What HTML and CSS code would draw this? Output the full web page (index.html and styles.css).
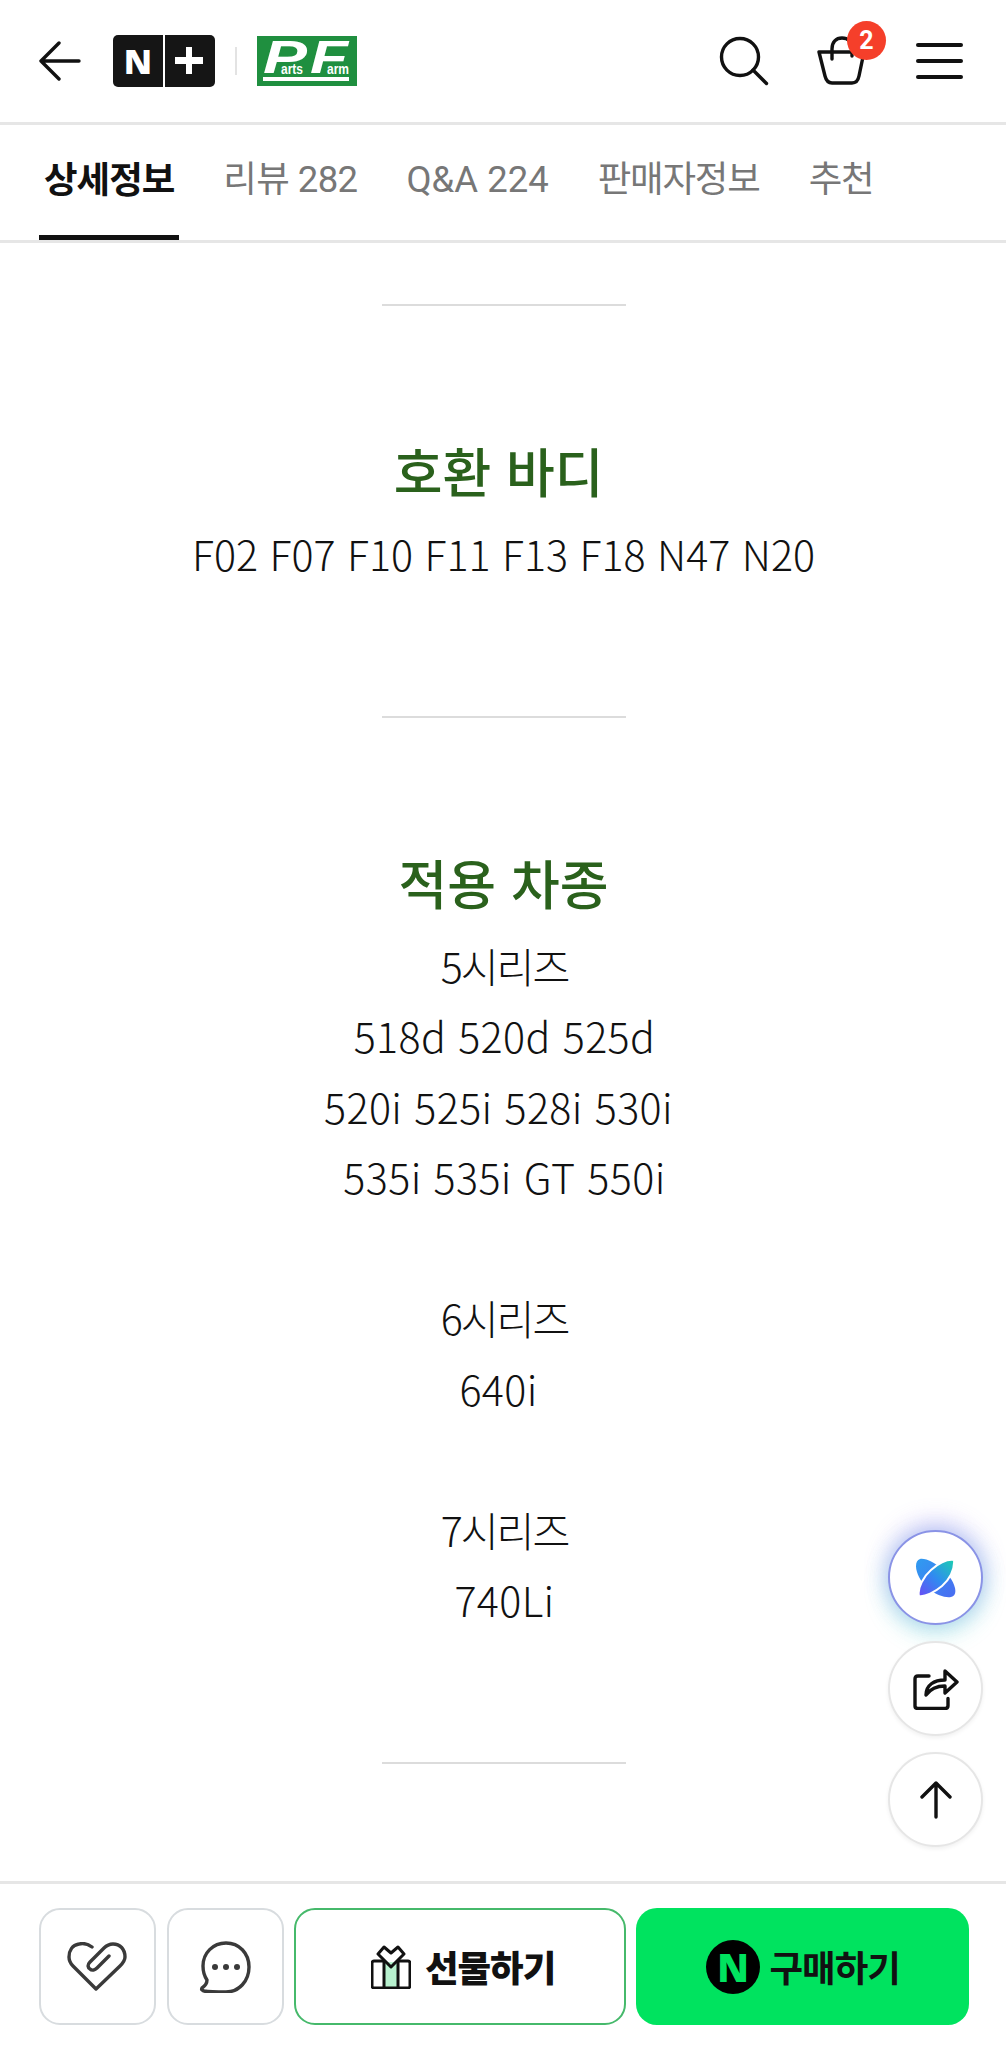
FILE: index.html

```html
<!DOCTYPE html>
<html lang="ko">
<head>
  <meta charset="UTF-8">
  <title>상세정보</title>
  <link rel="stylesheet" href="styles.css">
</head>
<body>
  <div class="page">
    <header class="top">
      <div class="top-left">
        <svg class="back" width="42" height="40" viewBox="0 0 42 40" fill="none" stroke="#111" stroke-width="3.4" stroke-linecap="round" stroke-linejoin="round"><path d="M20 2 2 20l18 18M2 20h38"/></svg>
        <div class="nplus"><span class="nplus-cell">N</span><span class="nplus-cell nplus-plus"></span></div>
        <span class="logo-sep"></span>
        <svg class="pf" width="100" height="50" viewBox="0 0 100 50">
          <rect width="100" height="50" fill="#1f8f3f"/>
          <text x="6" y="37" class="pf-big" textLength="44" lengthAdjust="spacingAndGlyphs">P</text>
          <text x="53" y="37" class="pf-big" textLength="38" lengthAdjust="spacingAndGlyphs">F</text>
          <text x="24" y="38" class="pf-small" textLength="22" lengthAdjust="spacingAndGlyphs">arts</text>
          <text x="70" y="38" class="pf-small" textLength="22" lengthAdjust="spacingAndGlyphs">arm</text>
          <rect x="6" y="41" width="86" height="4" fill="#fff"/>
        </svg>
      </div>
      <div class="top-right">
        <svg width="50" height="50" viewBox="0 0 50 50" fill="none" stroke="#111" stroke-width="3.4" stroke-linecap="round"><circle cx="21" cy="21" r="18.5"/><path d="M34 34l13.500 13.500"/></svg>
        <div class="cart">
          <svg width="50" height="50" viewBox="0 0 50 50" fill="none" stroke="#111" stroke-width="3.4" stroke-linecap="round" stroke-linejoin="round"><path d="M2 16h45l-5 24c-.8 4-3 7-7 7H15c-4 0-6-3-7-7zM15 23V13C15 6 19 2 25 2s10 4 10 11v7"/></svg>
          <span class="badge">2</span>
        </div>
        <div class="burger"><span></span><span></span><span></span></div>
      </div>
    </header>

    <nav class="tabs">
      <a class="tab tab-on">상세정보</a>
      <a class="tab tab-mixed">리뷰 282</a>
      <a class="tab tab-latin">Q&amp;A 224</a>
      <a class="tab">판매자정보</a>
      <a class="tab">추천</a>
    </nav>

    <main class="detail">
      <hr class="rule rule-first">
      <h2 class="title title-first">호환 바디&nbsp;</h2>
      <p class="copy">F02 F07 F10 F11 F13 F18 N47 N20</p>
      <hr class="rule rule-second">
      <h2 class="title title-tight">적용 차종</h2>
      <p class="copy copy-list"><span class="series">5시리즈</span><br>518d 520d 525d<br>520i 525i 528i 530i&nbsp;<br>535i 535i GT 550i<br><br><span class="series">6시리즈</span><br>640i&nbsp;<br><br><span class="series">7시리즈</span><br>740Li</p>
      <hr class="rule rule-third">

      <div class="floats">
        <button class="float float-ai">
          <svg width="40" height="40" viewBox="0 0 40 40">
            <defs>
              <linearGradient id="aiBack" x1="0" y1="0" x2="1" y2="1"><stop offset="0" stop-color="#2f9cf0"/><stop offset="1" stop-color="#4a6cf2"/></linearGradient>
              <linearGradient id="aiFront" x1="0" y1="1" x2="1" y2="0"><stop offset="0" stop-color="#6a4cf5"/><stop offset=".5" stop-color="#2f8cf0"/><stop offset="1" stop-color="#1ccfb0"/></linearGradient>
            </defs>
            <path fill="url(#aiBack)" d="M4 1C0 2-1 8 1 14c2 7 7 13 13 18 7 5 15 8 21 7 4-1 5-4 4-9-2-8-7-14-13-19C19 5 10 0 4 1z"/>
            <path fill="url(#aiFront)" stroke="#fff" stroke-width="2" d="M38 2c1 10-5 20-12 26-7 6-17 11-23 10-2-8 5-20 12-26C22 6 31 1 38 2z"/>
          </svg>
        </button>
        <button class="float">
          <svg width="46" height="42" viewBox="0 0 46 42" fill="none" stroke="#111" stroke-width="3.400" stroke-linecap="round" stroke-linejoin="round"><path d="M16 8H5C3 8 2 9 2 11v27c0 1.500 1 2.500 3 2.500h27c2 0 3-1 3-3v-7"/><path d="M13 27c0-10 8-15 19-15V3l12 11-12 11v-7c-8 0-14 2-19 9z"/></svg>
        </button>
        <button class="float">
          <svg width="32" height="38" viewBox="0 0 32 38" fill="none" stroke="#111" stroke-width="3.400" stroke-linecap="round" stroke-linejoin="round"><path d="M2 16 16 2l14 14M16 2v34"/></svg>
        </button>
      </div>
    </main>

    <footer class="bar">
      <button class="btn btn-icon btn-like">
        <svg width="60" height="50" viewBox="-1 -1 60 50" fill="none" stroke="#3a3a3a" stroke-width="3.400" stroke-linecap="round" stroke-linejoin="round"><path d="M24 4C20 1 15 0 11 1 4 2 1 8 1 14c0 4 2 7 4 9l23 23 24-23c3-3 5-6 5-9 0-8-5-13-12-13-4 0-7 2-9 4L22 19c-3 3-2 6 0 7 2 2 5 1 7-1l12-12"/></svg>
      </button>
      <button class="btn btn-icon">
        <svg width="52" height="52" viewBox="0 0 52 52" fill="none" stroke="#3a3a3a" stroke-width="3.400" stroke-linecap="round" stroke-linejoin="round"><path d="M27 2C14 2 4 12 4 25c0 6 2 11 4 14 0 3-2 6-5 8-1 2 0 2 2 3 6 1 13 1 22 1 13 0 23-11 23-25S40 2 27 2z"/><circle cx="16" cy="26" r="3" fill="#3a3a3a" stroke="none"/><circle cx="27" cy="26" r="3" fill="#3a3a3a" stroke="none"/><circle cx="38" cy="26" r="3" fill="#3a3a3a" stroke="none"/></svg>
      </button>
      <button class="btn btn-gift">
        <svg width="40" height="44" viewBox="0 0 40 44" fill="none" stroke="#111" stroke-width="3" stroke-linejoin="round"><rect x="14" y="17" width="12" height="25" fill="#b8f2cf" stroke="none"/><path d="M13 16H3c-1 0-2 1-2 2v23c0 1 1 2 2 2h34c1 0 2-1 2-2V18c0-1-1-2-2-2H27M13 16v27M27 16v27"/><path d="M20 8l7-6 6 7-13 13L7 9l6-7z"/></svg>
        <span>선물하기</span>
      </button>
      <button class="btn btn-buy">
        <span class="npay">N</span>
        <span>구매하기</span>
      </button>
    </footer>
  </div>
</body>
</html>
```

FILE: styles.css

```css
* {
  box-sizing: border-box;
}
body {
  margin: 0;
  background: #fff;
  font-family: "Noto Sans CJK KR", "Noto Sans", sans-serif;
}
.page {
  display: flex;
  flex-direction: column;
  height: 2048px;
}
.top {
  display: flex;
  justify-content: space-between;
  align-items: center;
  height: 125px;
  padding: 0 43px 0 39px;
  border-bottom: 3px solid #e6e6e6;
}
.top-left, .top-right {
  display: flex;
  align-items: center;
}
.back {
  margin-right: 32px;
}
.nplus {
  display: flex;
  gap: 2px;
}
.nplus-cell {
  display: flex;
  align-items: center;
  justify-content: center;
  width: 50px;
  height: 52px;
  background: #151515;
  color: #fff;
  font: 900 34px "Noto Sans", sans-serif;
  border-radius: 5px 0 0 5px;
}
.nplus-plus {
  position: relative;
  border-radius: 0 5px 5px 0;
}
.nplus-plus::before, .nplus-plus::after {
  content: "";
  position: absolute;
  background: #fff;
}
.nplus-plus::before {
  left: 10px;
  top: 22px;
  width: 28px;
  height: 7px;
}
.nplus-plus::after {
  left: 21px;
  top: 12px;
  width: 6px;
  height: 27px;
}
.logo-sep {
  width: 2px;
  height: 28px;
  margin: 0 20px;
  background: #e3e3e3;
}
.pf-big {
  font: italic 900 46px "Liberation Sans", sans-serif;
  fill: #fff;
}
.pf-small {
  font: 700 15px "Liberation Sans", sans-serif;
  fill: #fff;
}
.top-right {
  gap: 48px;
}
.cart {
  position: relative;
  width: 50px;
  height: 50px;
  margin-right: 1px;
}
.badge {
  position: absolute;
  left: 30px;
  top: -15px;
  width: 39px;
  height: 39px;
  border-radius: 50%;
  background: #f53f2a;
  color: #fff;
  font: 700 25px/39px Roboto, sans-serif;
  text-align: center;
}
.burger {
  display: flex;
  flex-direction: column;
  gap: 12px;
  width: 47px;
}
.burger span {
  height: 4px;
  border-radius: 2px;
  background: #111;
}
.tabs {
  display: flex;
  height: 118px;
  padding-left: 39px;
  gap: 39px;
  border-bottom: 3px solid #e6e6e6;
}
.tab {
  display: flex;
  align-items: center;
  height: 115px;
  padding: 0 5px 6px;
  font-family: Roboto, "Noto Sans CJK KR", sans-serif;
  font-size: 36.5px;
  line-height: 50px;
  color: #777;
  letter-spacing: -1.2px;
}
.tab-mixed {
  letter-spacing: -0.6px;
}
.tab-latin {
  letter-spacing: 0;
}
.tab-on {
  color: #111;
  font-family: "Noto Sans CJK KR", sans-serif;
  font-weight: 700;
  letter-spacing: -1px;
  border-bottom: 5px solid #111;
  padding-bottom: 5px;
}
.detail {
  position: relative;
  flex: 1;
  text-align: center;
  padding: 61px 0 0 1px;
}
.rule {
  width: 244px;
  height: 2px;
  margin: 0 auto;
  border: 0;
  background: #dcdcdc;
}
.title {
  margin: 0;
  font-size: 53px;
  font-weight: 500;
  color: #2a611c;
  line-height: 70px;
}
.title-first {
  margin: 129px 0 0 5px;
}
.title-tight {
  margin-top: 129px;
}
.copy {
  margin: 13px 0 0;
  font-size: 41.2px;
  font-weight: 300;
  line-height: 70.5px;
  color: #111;
}
.copy-list {
  padding-left: 2px;
  letter-spacing: 0.4px;
}
.series {
  letter-spacing: -2px;
}
.rule-second {
  margin-top: 127px;
}
.rule-third {
  margin-top: 127px;
}
.floats {
  position: absolute;
  right: 23px;
  top: 1287px;
  display: flex;
  flex-direction: column;
  gap: 16px;
}
.float {
  display: flex;
  align-items: center;
  justify-content: center;
  width: 95px;
  height: 95px;
  padding: 0;
  border: 2px solid #e6e6e6;
  border-radius: 50%;
  background: #fff;
  box-shadow: 0 2px 4px rgba(0,0,0,0.06);
}
.float-ai {
  border-color: #8a93e6;
  box-shadow: 0 -8px 24px rgba(150,110,240,0.3), 0 8px 24px rgba(60,220,190,0.28), 0 0 22px rgba(80,150,240,0.28);
}
.bar {
  display: flex;
  gap: 10px;
  height: 167px;
  padding: 24px 37px 26px 39px;
  border-top: 3px solid #e6e6e6;
}
.btn {
  display: flex;
  align-items: center;
  justify-content: center;
  height: 117px;
  padding: 0;
  border-radius: 21px;
  background: #fff;
  font-family: inherit;
  font-size: 36.5px;
  font-weight: 700;
  color: #111;
  letter-spacing: -1px;
}
.btn-icon {
  width: 117px;
  border: 2px solid #d8dcdf;
}
.btn-like {
  margin-right: 1px;
}
.btn-gift {
  width: 333px;
  gap: 14px;
  padding-left: 6px;
  font-weight: 900;
  border: 2px solid #46b96b;
}
.btn-buy {
  width: 333px;
  gap: 10px;
  border: 0;
  background: #00e35f;
}
.npay {
  display: flex;
  align-items: center;
  justify-content: center;
  width: 54px;
  height: 54px;
  border-radius: 50%;
  background: #000;
  color: #00e35f;
  font: 900 38px "Noto Sans", sans-serif;
}
```
